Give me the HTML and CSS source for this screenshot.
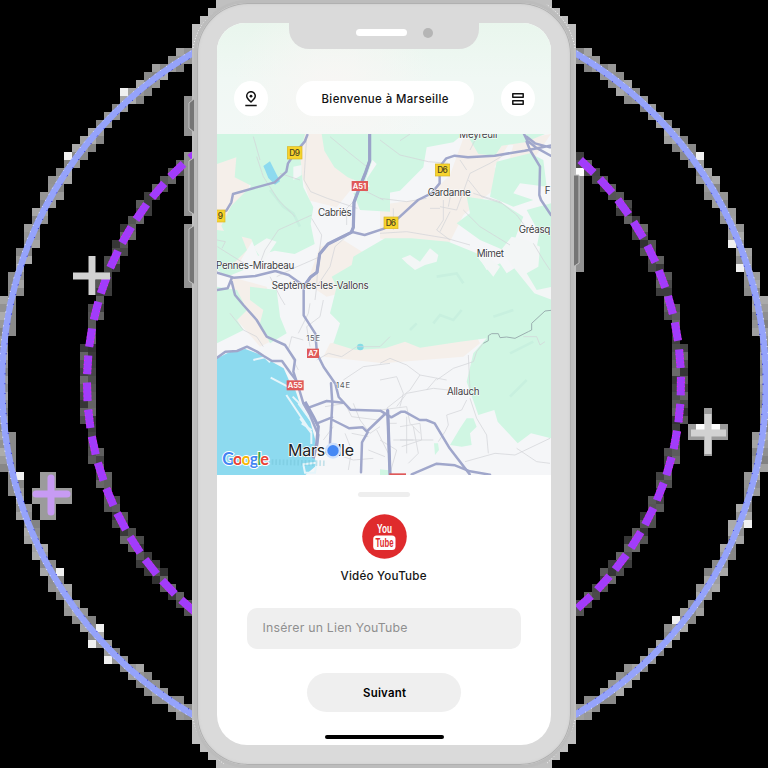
FILE: index.html
```html
<!DOCTYPE html>
<html lang="fr">
<head>
<meta charset="utf-8">
<title>Marseille</title>
<link rel="stylesheet" href="styles.css">
</head>
<body>
<main class="scene">
  <svg class="orbit" viewBox="0 0 768 768" aria-hidden="true">
    <g id="cells" shape-rendering="crispEdges"></g>
    <g shape-rendering="crispEdges">
      <path fill="#929292" d="M184 96h8v40h-8zM184 152h8v64h-8zM184 224h8v64h-8zM576 168h8v104h-8z"/>
      <path fill="#9b9b9b" d="M40 472h16v48H40zM32 488h40v16H32zM704 408h8v48h-8zM688 424h40v16h-40z"/>
      <path fill="#fff" d="M696 424h24v8h-24zM576 168h8v8h-8z"/>
    </g>
    <circle class="ring" cx="384" cy="384" r="382"/>
    <circle class="ring-edge" cx="384" cy="384" r="385"/>
    <circle class="ring-edge blue" cx="384" cy="384" r="379"/>
    <g id="dashes"></g>
    <path class="backing" shape-rendering="crispEdges" d="M192 744V24h8v-8h8V8h8V0h336v8h8v8h8v8h8v720h-8v8h-8v8h-8v8H216v-8h-8v-8h-8v-8z"/>
    <path class="sparkle" d="M193 48Q198 20 222 8M575 48Q570 20 546 4M193 720Q200 745 224 764M575 720Q568 745 546 764"/>
    <g class="plus"><path d="M92 256v39M73 276h37"/></g>
    <g class="plus violet"><path d="M51 478v34M36 494h31"/></g>
    <g class="plus"><path d="M708 414v40M691 433h35"/></g>
    <path fill="#757575" stroke="#c4c4c4" stroke-width="1" d="M195 98l-6 5v25l6 5zM195 157l-6 4v50l6 4zM195 225l-6 4v52l6 4zM573 175h6v88l-6 4z"/>
  </svg>

  <div class="phone">
    <div class="notch"><span class="speaker"></span><span class="camera"></span></div>
    <div class="screen">
      <header class="topbar">
        <button class="round" aria-label="Position"><svg width="14" height="16" viewBox="0 0 14 16"><path d="M7 11C4.400 8.800 2.700 7 2.700 5a4.300 4.300 0 0 1 8.600 0C11.300 7 9.600 8.800 7 11zM1.300 14.500h11.400" fill="none" stroke="#111" stroke-width="1.500"/><circle cx="7" cy="5.200" r="1.400" fill="#111"/></svg></button>
        <div class="title"><svg width="128" height="18"><text x="0.500" y="13" textLength="127">Bienvenue à Marseille</text></svg></div>
        <button class="round" aria-label="Menu"><svg width="14" height="14" viewBox="0 0 14 14"><path d="M1.800 1.800h10.400v3.500H1.800zM1.800 8.700h10.400v3.500H1.800z" fill="none" stroke="#111" stroke-width="1.500" stroke-linejoin="round"/></svg></button>
      </header>

      <svg class="map" viewBox="21 12 1002 1023" preserveAspectRatio="none">
        <rect x="21" y="12" width="1002" height="1023" fill="#f5f6f8"/>
        <g class="sand">
          <path d="M21 60l60 0 40 80-10 80-90 40zM235 12h140l70 80-25 90-40 50-80-20zM330 350l70-20 80 50 50 60-60 30-120 30-60-40zM60 440l110 30 40 150-60 30-70-80z"/>
          <path d="M510 225l140-20 70-70 40-110 150 20-30 110-120 100-60 120-190-50zM1023 12l-120 20-50 80 80 30zM360 640l170-20 260-20 20 40-50 40-240 20-180-20z"/>
          <path d="M21 240l70-20 50 90-60 100-60-60z"/>
        </g>
        <g class="green">
          <path d="M21 12h264l-15 60 10 100 30 60-8 50 12 60-60 30-60-10-50 15-20-50-40-10-20 30-30-60 30-60 60-60-50-25 5-60-58 20zM335 12h138l20 60-30 90-50-20-40-30-30-50zM430 190l60-25 50 20v60l-90-5z"/>
          <path d="M21 300l70 10 20 50-40 40 30 20-50 20-30-20zM21 470l60 10 30 60-30 30 20 30-80 40zM120 470l80 10 10 80 20 50-50 30-30-60 10-40-40-30z"/>
          <path d="M480 12h280l-30 25-80 15-10 60-70 70-80 15-20-50 30-45-40-40zM770 12h235l-60 25-70 10-20 30-50-5zM860 95l100-25 40 20 10 80-80-10-20 30 60 20-60 20-70-30z"/>
          <path d="M770 200l100 15 70 45-30 80-30 20-70-30-70-50 40-30zM950 240l73-20v320l-60-50-50-60 60-40 15-80z"/>
          <path d="M430 380l95-55 80 0 110 10 85 35 30 50 40-20 20 30 30-20 103 120v395l-60-15-40 30-60-65-10-35-48 15-35-100 20-85 40-45-80 10-120 18-45-18-60 20-90 5-65-20 20-60-30-30 20-80-15-30 60-35z"/>
          <path d="M770 865l20 0 10 25-20 20 5 35-30 5-35-5 30-50zM672 940l12 0 3 20-12 15zM21 1010l25-20 10 30zM510 1018l25 3v14h-25z"/>
        </g>
        <g fill="#f3f6f6"><path d="M575 385l25-10 30 20 30-40 25 20-5 20-35 10-30 15-25-20zM805 385l30-5 35 30-20 30zM905 320l45 10 40 20-5 60-35 20 30 50 73-15v55l-80-30-80-100-20-30zM130 350l40-25 30 10-40 60zM250 110l25-5 0 30-25 15z"/></g>
        <path d="M670 580l20-25 40 15 25-30M600 600l20-20M850 560l60-20M900 800l50-50M680 440l60-10 20 30M900 670l70-35M180 180l40 50 30 20 20 40" fill="none" stroke="#c8f0df" stroke-width="8"/>

        <path class="water" d="M21 685l40-20 45-8 40 15 30 18 45 25 20 45 15 20 15 45 30 50 15 55-5 45 10 30-35 30H21zM160 108l20-14 30 60-15 10-20-20-10-25z"/>
        <circle cx="451" cy="651" r="10" fill="#87dce5"/>
        <path class="pier" d="M130 690l35-8 15 15M182 743l50 26M229 795l75 112 0 35M248 800l30 30M265 820l40 55M275 880l30 20M270 865l35 45M280 1003l40-5-5 30h-30z"/>

        <g class="lane">
          <path d="M21 330l25 5-10 20M22 350l80 50M150 400l15-40 40-60 100-45M200 440l50-25 80-35M305 265l30 50-10 70-5 80M180 440l30 60 15 25M290 20l-8 130 20 35 50 20 90 30M150 90l-20-70M140 80l20 60 45 70 50 50M210 130l60 20M360 20l60 50 50 40M460 180l60 30M440 205l-30 30 0 50M425 305l-50 45-15 60-40 60-5 40"/>
          <path d="M510 30l60 45 85 20 60 5M700 210l0 60-20 30 40 30M690 230l50 10 40-110 60-30 50-30M715 230l10-50M790 190l80 25 50 40 30 40M760 240l50 50 90 55M510 205l80 10 60-10M510 310l80-5 120 20 70 20M720 245l-30 60M775 150l40 50 60 20M550 235l0 65M660 235l30 0M600 12l-30 20M970 340l30 50 20 30M780 60l20-40M750 90l20 30"/>
          <path d="M60 550l40 50 40 20 20 30M280 630l-35-10-10 40 30 60M340 510l-10 50-40 30 10 60M265 610l30-60 5-30M320 690l35-20 40 10 45-30 70 0 30-30M400 750l60-40 80-10M345 830l60-10 20 40 80 10M370 890l-30 40M430 820l20 50 30 40 30-20M405 910l20 50-10 60M475 920l-50-10M500 900l40 80M475 960l50 20M370 970l60 20 60-5"/>
          <path d="M510 700l30-15 50 20 40 30 80 15M630 735l-30 45-70 55M680 750l50-35 60-20 10-30 20-25M775 675l5 105M650 780l30-35M560 830l30-40 80-15 90 10M780 805l20 60 30 50 5 55M770 810l-15 30-45 15 5 30-10 20-20 30M510 750l50-10 20 50-10 40M510 840l80-10 10 50 30 30M765 995l90-25 60 5 105-50M920 955l60 40 40 5M570 890l60-10M570 930l100 0M560 880l-25 0M590 860l0 110M550 930l60 0M610 890l15 80-30 30M510 930l50 30-20 70M630 880l5 50-60 20M940 620l40 0 10 25 15-10"/>
        </g>
        <path d="M820 640l15-8 0-15 10-6 20 0 5 12 20-2 25 4 40-20 10-5 0-20 40-37 18-2" fill="none" stroke="#9bafb0" stroke-width="3"/>

        <g class="road">
          <path d="M292 15l-8 20-30 35-20 30-5 25-35 32-55 15-70 20-5 25-15 25-28 12M21 428l50 15 65-5 60-15 40 12 35 25M65 445l-12 30-32 5M65 455l10 40 25 30 40 45 30 50 55 25 30 45-5 35 15 45 15 50 20 35 25 60-5 40"/>
          <path d="M21 683l25-18 35-2 30-13 30 15 20 13 25 15 30 0 25 35 15 20"/>
          <path d="M479 12v80l-12 35-20 50-15 40-2 75-6 15-70 35-25 30-8 55-20 15-20 28v86l35 55 5 60 20 40 35 50 10 40 35 38 90 3 33 20 30-17 10 0 45 25 20 0 25 10 45 75 60 78"/>
          <path d="M424 305l40 10 60-20 40-30 60-55 40-20 25-30 0-50 20-25 25-8 40 5 80-5 90-15 100-20M942 12l10 20 25 20 45 25M950 35l10 25 30 50-2 85 5 15 30 45M950 20l25 20 45 12"/>
          <path d="M363 760l4 60-7 120M368 870l30 15 20 10 40-3 15 15-17 30-3 90M290 835l60-22 50 5M321 880l45-18M475 900l50-48M533 840l7 195M605 1033l75-32 55 5 45 18 60 10"/>
        </g>
        <path class="highway" d="M479 12v80l-12 35-20 50-15 40-2 75-6 15-70 35-25 30-8 55-20 15-20 28M285 815l25 45 15 30-5 50-10 45M533 840l7 195"/>
        <g class="tag yellow"><rect x="232" y="50" width="44" height="37"/><rect x="0" y="240" width="45" height="36"/><rect x="676" y="102" width="43" height="36"/><rect x="522" y="261" width="42" height="35"/></g>
        <g class="tag red"><rect x="425" y="153" width="49" height="30"/><rect x="291" y="656" width="36" height="28"/><rect x="230" y="751" width="51" height="30"/><rect x="538" y="1030" width="50" height="12"/></g>
        <g class="tagtext"><text x="238" y="77" textLength="32">D9</text><text x="23" y="267">9</text><text x="682" y="129" textLength="31">D6</text><text x="527" y="287" textLength="31">D6</text></g>
        <g class="tagtext light"><text x="428" y="176" textLength="41">A51</text><text x="295" y="678" textLength="28">A7</text><text x="233" y="774" textLength="45">A55</text></g>
        <g class="place">
          <text x="748" y="23" textLength="114">Meyreuil</text>
          <text x="324" y="258" textLength="101">Cabriès</text>
          <text x="653" y="199" textLength="129">Gardanne</text>
          <text x="1004" y="192">F</text>
          <text x="926" y="308" textLength="95">Gréasq</text>
          <text x="800" y="382" textLength="82">Mimet</text>
          <text x="18" y="417" textLength="235">Pennes-Mirabeau</text>
          <text x="185" y="476" textLength="291">Septèmes-les-Vallons</text>
          <text x="711" y="796" textLength="98">Allauch</text>
        </g>
        <g class="district"><text x="289" y="633" textLength="41">15E</text><text x="378" y="775" textLength="42">14E</text></g>
        <path d="M185 996l165 4" stroke="#6bbdd0" stroke-width="17" stroke-dasharray="5 6" opacity=".35"/>
        <text class="city" x="234" y="979" textLength="198">Marseille</text>
        <circle cx="369" cy="962" r="24" fill="#d3e2fb"/>
        <circle cx="369" cy="962" r="17" fill="#4688f4"/>
        <text class="google" x="37" y="1005" textLength="140"><tspan fill="#4285f4">G</tspan><tspan fill="#e94235">o</tspan><tspan fill="#f6b705">o</tspan><tspan fill="#4285f4">g</tspan><tspan fill="#34a853">l</tspan><tspan fill="#e94235">e</tspan></text>
      </svg>

      <section class="sheet">
        <span class="grabber"></span>
        <svg class="logo" width="45" height="45" viewBox="0 0 45 45">
          <circle cx="22.500" cy="22.500" r="22.300" fill="#df2b2d"/>
          <rect x="11.200" y="21.500" width="22.300" height="14.500" rx="3.500" fill="#fff"/>
          <text x="15" y="18.500" textLength="15" lengthAdjust="spacingAndGlyphs" fill="#fff">You</text>
          <text x="13.500" y="33.200" textLength="18" lengthAdjust="spacingAndGlyphs" fill="#df2b2d">Tube</text>
        </svg>
        <svg class="caption" width="88" height="18"><text x="0.500" y="13" textLength="86">Vidéo YouTube</text></svg>
        <div class="field"><svg width="148" height="20"><text x="0.500" y="14" textLength="145">Insérer un Lien YouTube</text></svg></div>
        <button class="next"><svg width="45" height="18"><text x="1" y="13" textLength="43">Suivant</text></svg></button>
        <span class="home"></span>
      </section>
    </div>
  </div>
</main>
<script src="orbit.js"></script>
</body>
</html>
```
FILE: styles.css
```css
* { box-sizing: border-box; }
body { margin: 0; background: #000; font-family: Inter, "Open Sans", sans-serif; }
button { border: 0; padding: 0; font: inherit; }
svg { display: block; }
.scene { position: relative; width: 768px; height: 768px; overflow: hidden; background: #000; display: flex; justify-content: center; }
.orbit { position: absolute; inset: 0; width: 768px; height: 768px; }
.ring { fill: none; stroke: #95a3fb; stroke-width: 6.5; }
.ring-edge { fill: none; stroke: #f1f4ff; stroke-width: 1; stroke-dasharray: 1 6; }
.ring-edge.blue { stroke: #1717d8; stroke-dasharray: 1 9; }
.dash { stroke: #a13cfb; stroke-width: 8; fill: none; }
.dash-edge { stroke: #f31cf0; stroke-width: 1; stroke-dasharray: 1 3; }
.backing { fill: #c0c0c0; }
.sparkle { fill: none; stroke: #fff; stroke-width: 1; stroke-dasharray: 1 2; }
.plus { fill: none; stroke: #d2d2d2; stroke-width: 7; }
.plus.violet { stroke: #c79bf3; stroke-linecap: round; }

.phone { position: relative; width: 380px; height: 768px; padding: 20px; background: #dadada; border: 3px solid #bcbcbc; border-radius: 54px; box-shadow: inset 0 0 0 1px #b0b0b0, inset 0 0 3px 1px #cacaca; }
.screen { width: 334px; height: 722px; border-radius: 28px 28px 30px 30px; overflow: hidden; background: #fff; display: flex; flex-direction: column; }
.notch { position: absolute; z-index: 1; left: 92px; top: 17px; width: 190px; height: 29px; border-radius: 0 0 20px 20px; background: #dadada; }
.speaker { position: absolute; left: 67px; top: 9px; width: 51px; height: 7px; border-radius: 4px; background: #fff; }
.camera { position: absolute; left: 134px; top: 8px; width: 10px; height: 10px; border-radius: 50%; background: #b5b5b5; }
.topbar { height: 111px; padding: 58px 16px 0 17px; display: flex; justify-content: space-between; align-items: flex-start; background: radial-gradient(circle at 35% 60%, #f8f6f4 0, #f8f6f400 45%), linear-gradient(180deg, #e9f6ed 0, #f0f8f4 50%, #f3f8f6 100%); }
.round { width: 34px; height: 35px; border-radius: 50%; background: #fff; display: grid; place-items: center; }
.title { width: 178px; height: 35px; border-radius: 18px; background: #fff; display: grid; place-items: center; }
.title text { font-size: 11.4px; font-weight: 500; fill: #111; }
.map { width: 334px; height: 341px; flex: none; }
.sand { fill: #f5efea; }
.green { fill: #d0f6e3; }
.water { fill: #8ddaef; }
.pier { fill: none; stroke: #e6f5fa; stroke-width: 6; }
.lane { fill: none; stroke: #d3d5d8; stroke-width: 2.2; stroke-linejoin: round; }
.road { fill: none; stroke: #a0a7cb; stroke-width: 7.5; stroke-linejoin: round; stroke-linecap: round; }
.highway { fill: none; stroke: #9ba3c9; stroke-width: 9.5; stroke-linejoin: round; }
.yellow { fill: #f7d42d; stroke: #d7b523; stroke-width: 2; }
.red { fill: #df5959; }
.tagtext { font-size: 25px; font-weight: 500; fill: #4a4220; }
.tagtext.light { font-size: 23px; font-weight: 600; fill: #fff; }
.place { font-size: 29.5px; fill: #3d4043; paint-order: stroke; stroke: #fff; stroke-width: 3px; }
.district { font-size: 23px; fill: #55585c; paint-order: stroke; stroke: #fff; stroke-width: 3px; }
.city { font-size: 48px; fill: #202225; paint-order: stroke; stroke: #fff; stroke-width: 5px; }
.google { font-family: Lato, sans-serif; font-size: 49px; font-weight: 700; paint-order: stroke; stroke: #fff; stroke-width: 6px; }

.sheet { flex: 1; display: flex; flex-direction: column; align-items: center; padding-top: 17px; }
.grabber { width: 52px; height: 5px; border-radius: 3px; background: #eee; }
.logo { margin-top: 17px; }
.logo text { font-family: "Liberation Sans", sans-serif; font-size: 13.5px; font-weight: 700; }
.caption { margin-top: 8px; }
.caption text { font-size: 11.6px; font-weight: 500; fill: #151515; }
.field { width: 274px; height: 41px; margin-top: 23px; padding: 10px 15px; border-radius: 10px; background: #efefef; }
.field text { font-size: 12.3px; font-weight: 400; fill: #8f8f8f; }
.next { width: 154px; height: 39px; margin-top: 24px; border-radius: 20px; background: #efefef; display: grid; place-items: center; }
.next text { font-size: 11.4px; font-weight: 600; fill: #000; }
.home { width: 119px; height: 4px; margin-top: 23px; border-radius: 2px; background: #000; }
```
FILE: orbit.js
```js
const NS = "http://www.w3.org/2000/svg";
const cells = document.getElementById("cells");
const dashes = document.getElementById("dashes");

function add(parent, name, attrs) {
  const el = document.createElementNS(NS, name);
  for (const key in attrs) el.setAttribute(key, attrs[key]);
  parent.appendChild(el);
}

// Shades the 8px tiles that a ring passes through.
function tiles(cy, inner, outer, base, range) {
  for (let y = 0; y < 768; y += 8) {
    for (let x = 0; x < 768; x += 8) {
      const ax = Math.abs(x + 4 - 384), ay = Math.abs(y + 4 - cy);
      const near = Math.hypot(Math.max(ax - 4, 0), Math.max(ay - 4, 0));
      const far = Math.hypot(ax + 4, ay + 4);
      if (near > outer || far < inner) continue;
      const n = (x * 37 + y * 61 + x * y * 3) / 8 % 17 / 17;
      const v = Math.round(base + n * range);
      add(cells, "rect", { x, y, width: 8, height: 8, fill: `rgb(${v},${v},${v})` });
    }
  }
}
tiles(383, 295.5, 298.5, 50, 60);
tiles(384, 379.5, 384.5, 130, 45);
for (const [x, y] of [[120, 88], [64, 152], [96, 624], [88, 640], [104, 656], [16, 472], [56, 568], [696, 152], [728, 240], [736, 264], [744, 520], [672, 616]]) {
  add(cells, "rect", { x, y, width: 8, height: 8, fill: "#f0f0f0" });
}

// Each run: horizontal side, vertical direction, first angle, step.
for (const [sx, sy, start, step] of [[-1, -1, 3.5, 5.28], [-1, 1, 1.7, 5.22], [1, -1, 4.7, 5.27], [1, 1, 0.6, 5.22]]) {
  for (let i = 0; i < 10; i++) {
    const line = (r, a0, a1) => [a0, a1].map(a => {
      const t = a * Math.PI / 180;
      return `${(384 + sx * r * Math.cos(t)).toFixed(1)} ${(383 + sy * r * Math.sin(t)).toFixed(1)}`;
    }).join("L");
    const a = start + i * step;
    add(dashes, "path", { class: "dash", d: "M" + line(297, a - 1.8, a + 1.8) });
    add(dashes, "path", { class: "dash-edge", d: "M" + line(293.5, a - 1.6, a + 1.6) + "M" + line(300.5, a - 1.6, a + 1.6) });
  }
}
```
